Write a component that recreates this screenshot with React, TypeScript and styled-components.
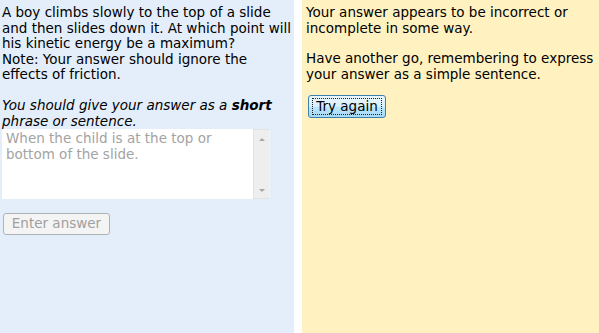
import React from "react";
import styled, { createGlobalStyle } from "styled-components";

const GlobalStyle = createGlobalStyle`
  html, body {
    margin: 0;
    padding: 0;
    background: #ffffff;
  }
  body {
    font-family: "DejaVu Sans", Verdana, sans-serif;
    font-size: 13.5px;
    line-height: 15.6px;
    color: #000;
  }
`;

const Page = styled.div`
  display: grid;
  grid-template-columns: 294px 297px;
  column-gap: 8px;
  width: 599px;
  height: 333px;
  overflow: hidden;
`;

const Panel = styled.section<{ $tone: "question" | "feedback" }>`
  background: ${(p) => (p.$tone === "question" ? "#e3eefa" : "#fff2c0")};
  padding: ${(p) => (p.$tone === "question" ? "5px 2px 0 2px" : "5px 4px 0 4px")};
`;

const Para = styled.p<{ $gap?: number }>`
  margin: 0 0 ${(p) => p.$gap ?? 15}px 0;
`;

const AnswerBox = styled.div`
  display: grid;
  grid-template-columns: 1fr 17px;
  width: 268px;
  height: 70px;
  background: #fff;
`;

const AnswerText = styled.textarea`
  border: none;
  outline: none;
  resize: none;
  overflow: hidden;
  background: transparent;
  font: inherit;
  color: #a3a3a3;
  padding: 2px 4px;
  margin: 0;
`;

const ScrollTrack = styled.div`
  display: flex;
  flex-direction: column;
  justify-content: space-between;
  align-items: center;
  background: #eeeeee;
  border: 1px solid #e2e2e2;
  border-right-color: #f4f4f4;
  padding: 8px 0 6px;
`;

const Arrow = styled.span<{ $dir: "up" | "down" }>`
  width: 0;
  height: 0;
  border-left: 3px solid transparent;
  border-right: 3px solid transparent;
  ${(p) =>
    p.$dir === "up"
      ? "border-bottom: 3px solid #a8a8a8;"
      : "border-top: 3px solid #a8a8a8;"}
`;

const DisabledButton = styled.button`
  margin: 14px 0 0 1px;
  height: 22px;
  width: 107px;
  padding: 0;
  font: inherit;
  color: #a0a0a0;
  background: #f4f4f4;
  border: 1px solid #adb2b5;
  border-radius: 3px;
`;

const TryButton = styled.button`
  margin: 0 0 0 2px;
  height: 23px;
  width: 78px;
  padding: 2px 3px;
  font: inherit;
  color: #000;
  background: linear-gradient(#eaf6fd, #d7effc 50%, #bde6fd 51%, #a6d9f4);
  border: 1px solid #3c7fb1;
  border-radius: 3px;
  cursor: pointer;
`;

const FocusRing = styled.span`
  display: block;
  border: 1px dotted #222;
  line-height: 15px;
`;

export default function App() {
  return (
    <>
      <GlobalStyle />
      <Page>
        <Panel $tone="question">
          <Para>
            A boy climbs slowly to the top of a slide and then slides down it. At which point will
            his kinetic energy be a maximum?
            <br />
            Note: Your answer should ignore the effects of friction.
          </Para>
          <Para $gap={0}>
            <em>
              You should give your answer as a <strong>short</strong> phrase or sentence.
            </em>
          </Para>
          <AnswerBox>
            <AnswerText
              readOnly
              defaultValue="When the child is at the top or bottom of the slide."
            />
            <ScrollTrack>
              <Arrow $dir="up" />
              <Arrow $dir="down" />
            </ScrollTrack>
          </AnswerBox>
          <DisabledButton disabled>Enter answer</DisabledButton>
        </Panel>
        <Panel $tone="feedback">
          <Para>Your answer appears to be incorrect or incomplete in some way.</Para>
          <Para $gap={13}>
            Have another go, remembering to express your answer as a simple sentence.
          </Para>
          <TryButton>
            <FocusRing>Try again</FocusRing>
          </TryButton>
        </Panel>
      </Page>
    </>
  );
}
